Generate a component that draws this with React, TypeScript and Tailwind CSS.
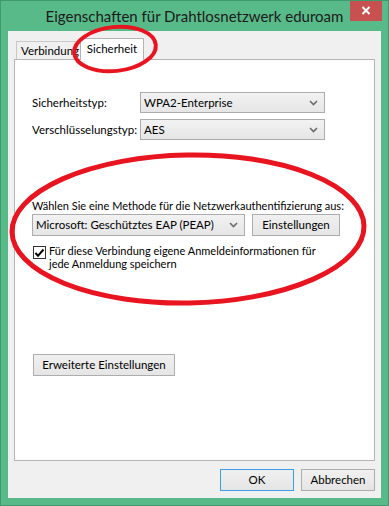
import React from "react";

const font = { fontFamily: 'Lato, "Noto Sans", sans-serif' };

function Chevron() {
  return (
    <svg width="9" height="6" viewBox="0 0 9 6" className="shrink-0">
      <path d="M1 1 L4.5 4.5 L8 1" fill="none" stroke="#6b6b6b" strokeWidth="1.6" />
    </svg>
  );
}

function Select({ value, className }: { value: string; className?: string }) {
  return (
    <div
      className={
        "h-[21px] flex items-center justify-between pl-[3px] pr-[6px] border border-[#acacac] bg-gradient-to-b from-[#f2f2f2] to-[#e6e6e6] text-[11.5px] text-black leading-none whitespace-nowrap " +
        (className ?? "")
      }
    >
      <span>{value}</span>
      <Chevron />
    </div>
  );
}

function Button({ label, className }: { label: string; className?: string }) {
  return (
    <div
      className={
        "h-[22px] flex items-center justify-center border bg-gradient-to-b from-[#f0f0f0] to-[#e5e5e5] text-[11.5px] text-black leading-none whitespace-nowrap " +
        (className ?? "")
      }
    >
      {label}
    </div>
  );
}

export default function App() {
  return (
    <div
      className="relative w-[389px] h-[506px] bg-[#59ba89] border border-[#3f9b6d] overflow-hidden"
      style={font}
    >
      {/* Title bar */}
      <div className="h-[30px] relative">
        <div className="absolute left-0 right-0 top-[5px] text-center text-[15px] text-[#1b1b1b] leading-[20px] whitespace-nowrap">
          Eigenschaften für Drahtlosnetzwerk eduroam
        </div>
        <div className="absolute right-[6px] top-[-1px] w-[32px] h-[21px] bg-[#c75050] flex items-center justify-center">
          <svg width="10" height="9" viewBox="0 0 10 9">
            <path d="M1.5 1 L8.5 8 M8.5 1 L1.5 8" stroke="#fff" strokeWidth="2" />
          </svg>
        </div>
      </div>

      {/* Client */}
      <div className="mx-[7px] h-[467px] bg-[#f0f0f0] pt-[7px] px-[6px] flex flex-col">
        {/* Tabs */}
        <div className="h-[21px] flex items-end pl-[2px] relative z-10">
          <div className="h-[18px] w-[66px] -mr-[2px] border border-b-0 border-[#c9c9c9] bg-[#f0f0f0] text-[11.5px] text-black pl-[4px] leading-[18px] overflow-hidden whitespace-nowrap">
            Verbindung
          </div>
          <div className="relative h-[22px] -mb-px w-[64px] border border-b-0 border-[#b4b4b4] bg-white text-[11.5px] text-black text-center leading-[20px] whitespace-nowrap">
            Sicherheit
          </div>
        </div>

        {/* Panel */}
        <div className="h-[402px] border border-[#b4b4b4] bg-white pl-[17px] flex flex-col text-[11px] text-black">
          <div className="mt-[32px] flex items-center text-[11.5px]">
            <div className="w-[108px] whitespace-nowrap">Sicherheitstyp:</div>
            <Select value="WPA2-Enterprise" className="w-[185px]" />
          </div>
          <div className="mt-[6px] flex items-center text-[11.5px]">
            <div className="w-[108px] whitespace-nowrap">Verschlüsselungstyp:</div>
            <Select value="AES" className="w-[185px]" />
          </div>

          <div className="mt-[58px] leading-[15px] whitespace-nowrap">
            Wählen Sie eine Methode für die Netzwerkauthentifizierung aus:
          </div>
          <div className="mt-[1px] flex items-center gap-[7px]">
            <Select value="Microsoft: Geschütztes EAP (PEAP)" className="w-[213px] h-[22px]" />
            <Button label="Einstellungen" className="w-[88px] border-[#adadad]" />
          </div>
          <div className="mt-[10px] flex items-start gap-[3px] pl-[1px]">
            <div className="mt-[0px] w-[13px] h-[13px] border border-[#333] bg-white flex items-center justify-center shrink-0">
              <svg width="11" height="10" viewBox="0 0 11 10">
                <path d="M1.5 5 L4 7.8 L9.5 1.5" fill="none" stroke="#000" strokeWidth="2" />
              </svg>
            </div>
            <div className="leading-[12.5px] whitespace-nowrap -mt-[1px]">
              Für diese Verbindung eigene Anmeldeinformationen für
              <br />
              jede Anmeldung speichern
            </div>
          </div>

          <div className="mt-[84px] pl-[1px]">
            <Button label="Erweiterte Einstellungen" className="w-[142px] border-[#adadad]" />
          </div>
        </div>

        {/* Bottom buttons */}
        <div className="mt-[8px] flex justify-end gap-[7px]">
          <Button label="OK" className="w-[74px] border-[#3c9ee6]" />
          <Button label="Abbrechen" className="w-[74px] border-[#adadad]" />
        </div>
      </div>

      {/* Red annotation ellipses */}
      <svg
        className="absolute left-0 top-0 pointer-events-none z-20"
        width="389"
        height="506"
        viewBox="0 0 389 506"
      >
        <ellipse cx="114" cy="48" rx="41" ry="22" transform="rotate(-6 114 48)" fill="none" stroke="#e8141f" strokeWidth="4" />
        <ellipse cx="187" cy="228" rx="176" ry="74" transform="rotate(-1 187 228)" fill="none" stroke="#e8141f" strokeWidth="5" />
      </svg>
    </div>
  );
}
